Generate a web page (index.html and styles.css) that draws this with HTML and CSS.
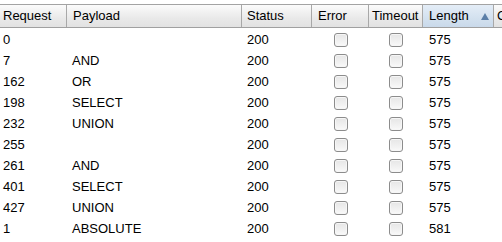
FILE: index.html
```html
<!DOCTYPE html>
<html>
<head>
<meta charset="utf-8">
<link rel="stylesheet" href="styles.css">
</head>
<body>
<div class="table">
  <div class="head">
    <div class="hc">Request</div>
    <div class="hc">Payload</div>
    <div class="hc">Status</div>
    <div class="hc">Error</div>
    <div class="hc">Timeout</div>
    <div class="hc sorted">Length<span class="arrow"></span></div>
    <div class="hc last">C</div>
  </div>
  <div class="body">
    <div class="row"><div class="c">0</div><div class="c pl"></div><div class="c st">200</div><div class="c cb"><span class="box"></span></div><div class="c cb"><span class="box"></span></div><div class="c len">575</div></div>
    <div class="row"><div class="c">7</div><div class="c pl">AND</div><div class="c st">200</div><div class="c cb"><span class="box"></span></div><div class="c cb"><span class="box"></span></div><div class="c len">575</div></div>
    <div class="row"><div class="c">162</div><div class="c pl">OR</div><div class="c st">200</div><div class="c cb"><span class="box"></span></div><div class="c cb"><span class="box"></span></div><div class="c len">575</div></div>
    <div class="row"><div class="c">198</div><div class="c pl">SELECT</div><div class="c st">200</div><div class="c cb"><span class="box"></span></div><div class="c cb"><span class="box"></span></div><div class="c len">575</div></div>
    <div class="row"><div class="c">232</div><div class="c pl">UNION</div><div class="c st">200</div><div class="c cb"><span class="box"></span></div><div class="c cb"><span class="box"></span></div><div class="c len">575</div></div>
    <div class="row"><div class="c">255</div><div class="c pl"></div><div class="c st">200</div><div class="c cb"><span class="box"></span></div><div class="c cb"><span class="box"></span></div><div class="c len">575</div></div>
    <div class="row"><div class="c">261</div><div class="c pl">AND</div><div class="c st">200</div><div class="c cb"><span class="box"></span></div><div class="c cb"><span class="box"></span></div><div class="c len">575</div></div>
    <div class="row"><div class="c">401</div><div class="c pl">SELECT</div><div class="c st">200</div><div class="c cb"><span class="box"></span></div><div class="c cb"><span class="box"></span></div><div class="c len">575</div></div>
    <div class="row"><div class="c">427</div><div class="c pl">UNION</div><div class="c st">200</div><div class="c cb"><span class="box"></span></div><div class="c cb"><span class="box"></span></div><div class="c len">575</div></div>
    <div class="row"><div class="c">1</div><div class="c pl">ABSOLUTE</div><div class="c st">200</div><div class="c cb"><span class="box"></span></div><div class="c cb"><span class="box"></span></div><div class="c len">581</div></div>
  </div>
</div>
</body>
</html>
```
FILE: styles.css
```css
html, body {
  margin: 0;
  padding: 0;
  background: #ffffff;
  overflow: hidden;
}
body {
  width: 502px;
  height: 242px;
  font-family: "Liberation Sans", Arial, sans-serif;
  font-size: 13px;
  color: #000;
}
.table {
  margin-top: 4px;
  width: 560px;
}
.head {
  display: grid;
  grid-template-columns: 67px 175px 70px 57px 54px 71px 66px;
  height: 22px;
  border-top: 1px solid #a3a3a3;
  border-bottom: 1px solid #a0a0a0;
  background: linear-gradient(#fbfbfb, #e9e9e9 60%, #e2e2e2);
}
.hc {
  position: relative;
  line-height: 22px;
  padding-left: 3px;
  border-right: 1px solid #a8a8a8;
  white-space: nowrap;
  overflow: hidden;
}
.hc:nth-child(2) { padding-left: 6px; }
.hc:nth-child(3) { padding-left: 5px; }
.hc:nth-child(4) { padding-left: 6px; }
.hc:nth-child(5) { padding-left: 3px; }
.hc.sorted {
  padding-left: 6px;
  background: linear-gradient(#e4edf7, #d3e1ef 60%, #c9d9ea);
}
.arrow {
  position: absolute;
  right: 4px;
  top: 8px;
  width: 0;
  height: 0;
  border-left: 4px solid transparent;
  border-right: 4px solid transparent;
  border-bottom: 7px solid #5b7fa8;
}
.hc.last { border-right: none; }
.body { padding-top: 1px; }
.row {
  display: grid;
  grid-template-columns: 67px 175px 70px 57px 54px 71px;
  height: 21px;
  line-height: 21px;
}
.c {
  padding-left: 3px;
  white-space: nowrap;
}
.c.pl { padding-left: 5px; }
.c.st { padding-left: 5px; }
.c.len { padding-left: 6px; }
.c.cb {
  display: flex;
  align-items: center;
  justify-content: center;
  padding-left: 0;
}
.box {
  display: block;
  width: 12px;
  height: 12px;
  border: 1px solid #8c8c8c;
  border-radius: 3px;
  background: linear-gradient(#e6e6e6, #f3f3f3 70%, #fafafa);
  box-shadow: inset 0 0 0 1px #f6f6f6;
}
```
